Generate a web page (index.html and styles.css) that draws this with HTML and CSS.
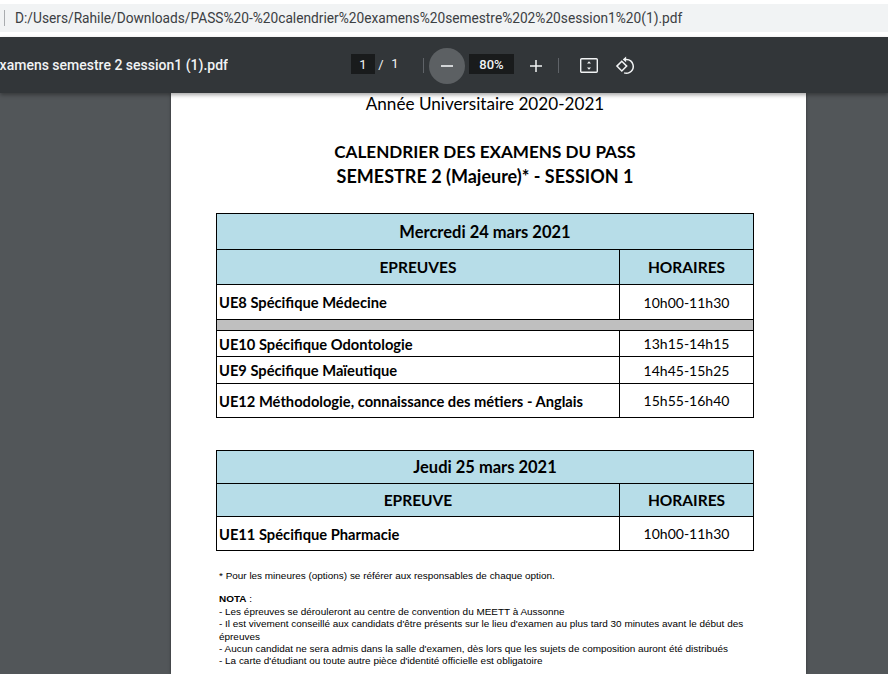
FILE: index.html
```html
<!DOCTYPE html>
<html lang="fr">
<head>
<meta charset="utf-8">
<title>PDF</title>
<link rel="stylesheet" href="styles.css">
</head>
<body>
<div class="address-wrap">
  <div class="address">
    <span class="address-sep"></span>
    <span class="url">D:/Users/Rahile/Downloads/PASS%20-%20calendrier%20examens%20semestre%202%20session1%20(1).pdf</span>
  </div>
</div>
<header class="toolbar">
  <div class="doc-title"><span>PASS - calendrier examens semestre 2 session1 (1).pdf</span></div>
  <div class="controls">
    <span class="page-box">1</span>
    <span class="page-slash">/</span>
    <span class="page-total">1</span>
    <span class="divider first"></span>
    <span class="zoom-out">
      <svg width="14" height="14" viewBox="0 0 14 14"><path d="M1 7h12" stroke="#f1f3f4" stroke-width="1.6"/></svg>
    </span>
    <span class="zoom-box">80%</span>
    <svg class="plus" width="14" height="14" viewBox="0 0 14 14"><path d="M1 7h12M7 1v12" stroke="#f1f3f4" stroke-width="1.5" fill="none"/></svg>
    <span class="divider second"></span>
    <svg class="fit" width="20" height="18" viewBox="0 0 20 18"><rect x="1.700" y="1.700" width="16.600" height="13.600" rx="1" fill="none" stroke="#f1f3f4" stroke-width="1.400"/><path d="M10 4.200l2 2.400H8zM10 12.800l2-2.400H8z" fill="#f1f3f4"/></svg>
    <svg class="rotate" width="20" height="20" viewBox="0 0 20 20"><path d="M6.800 5.200 1.900 10.100l4.900 4.900 4.900-4.900z" fill="none" stroke="#f1f3f4" stroke-width="1.500"/><path d="M9.200 3.400h2.200a6.900 6.900 0 0 1 3.300 12.900 6.900 6.900 0 0 1-5.600.6" fill="none" stroke="#f1f3f4" stroke-width="1.500"/><path d="M11.100.6 7.800 3.400l3.300 2.800z" fill="#f1f3f4"/></svg>
  </div>
</header>
<main class="viewer">
  <article class="page">
    <p class="year">Année Universitaire 2020-2021</p>
    <h1 class="heading">CALENDRIER DES EXAMENS DU PASS<br><span class="heading-second">SEMESTRE 2 (Majeure)* - SESSION 1</span></h1>
    <table class="exam first-table">
      <colgroup><col class="col-name"><col class="col-time"></colgroup>
      <tr class="r36"><th colspan="2" class="head day">Mercredi 24 mars 2021</th></tr>
      <tr class="r35"><th class="head">EPREUVES</th><th class="head">HORAIRES</th></tr>
      <tr class="r35"><td class="name">UE8 Spécifique Médecine</td><td class="time">10h00-11h30</td></tr>
      <tr class="r11"><td colspan="2" class="gap"></td></tr>
      <tr class="r26"><td class="name">UE10 Spécifique Odontologie</td><td class="time">13h15-14h15</td></tr>
      <tr class="r27"><td class="name">UE9 Spécifique Maïeutique</td><td class="time">14h45-15h25</td></tr>
      <tr class="r34"><td class="name">UE12 Méthodologie, connaissance des métiers - Anglais</td><td class="time">15h55-16h40</td></tr>
    </table>
    <table class="exam second-table">
      <colgroup><col class="col-name"><col class="col-time"></colgroup>
      <tr class="r33"><th colspan="2" class="head day">Jeudi 25 mars 2021</th></tr>
      <tr class="r33"><th class="head">EPREUVE</th><th class="head">HORAIRES</th></tr>
      <tr class="r34"><td class="name">UE11 Spécifique Pharmacie</td><td class="time">10h00-11h30</td></tr>
    </table>
    <p class="note star">* Pour les mineures (options) se référer aux responsables de chaque option.</p>
    <div class="note nota">
      <b>NOTA</b> :<br>
      - Les épreuves se dérouleront au centre de convention du MEETT à Aussonne<br>
      - Il est vivement conseillé aux candidats d'être présents sur le lieu d'examen au plus tard 30 minutes avant le début des épreuves<br>
      - Aucun candidat ne sera admis dans la salle d'examen, dès lors que les sujets de composition auront été distribués<br>
      - La carte d'étudiant ou toute autre pièce d'identité officielle est obligatoire
    </div>
  </article>
</main>
</body>
</html>
```
FILE: styles.css
```css
* { box-sizing: border-box; }
html, body { margin: 0; height: 100%; }
body {
  width: 888px;
  height: 674px;
  overflow: hidden;
  background: #fff;
  display: flex;
  flex-direction: column;
  font-family: "Liberation Sans", sans-serif;
}
.address-wrap { height: 37px; padding-top: 4px; background: #fff; flex: none; }
.address {
  height: 28px;
  background: #f1f3f4;
  display: flex;
  align-items: center;
  padding-left: 4px;
}
.address-sep { width: 1px; height: 16px; background: #a9acaf; flex: none; }
.url {
  margin-left: 10px;
  font-family: Roboto, sans-serif;
  font-size: 13.73px;
  color: #3c4043;
  white-space: nowrap;
}
.toolbar {
  height: 56px;
  flex: none;
  background: #323639;
  display: flex;
  align-items: center;
  box-shadow: 0 2px 4px rgba(0, 0, 0, .35);
  position: relative;
  z-index: 1;
}
.doc-title {
  width: 228px;
  flex: none;
  overflow: hidden;
  display: flex;
  justify-content: flex-end;
  font-family: Roboto, sans-serif;
  font-size: 14px;
  font-weight: 500;
  color: #f1f3f4;
  white-space: nowrap;
}
.doc-title span { flex: none; }
.controls {
  margin-left: 123px;
  display: flex;
  align-items: center;
  font-family: Roboto, sans-serif;
  font-size: 13px;
  color: #f1f3f4;
}
.page-box {
  width: 24px;
  height: 20px;
  margin-bottom: 2px;
  background: #191b1c;
  display: flex;
  align-items: center;
  justify-content: center;
}
.page-slash { margin-left: 1px; width: 10px; text-align: center; margin-bottom: 2px; }
.page-total { margin-left: 4px; width: 10px; text-align: center; margin-bottom: 4px; }
.divider { width: 1px; height: 15px; background: #5f6368; flex: none; }
.divider.first { margin-left: 23px; }
.divider.second { margin-left: 15px; }
.zoom-out {
  margin: 2px 0 0 5px;
  width: 36px;
  height: 36px;
  border-radius: 50%;
  background: #5c6063;
  display: flex;
  align-items: center;
  justify-content: center;
}
.zoom-box {
  margin: 0 0 2px 4px;
  width: 45px;
  height: 20px;
  background: #191b1c;
  font-weight: 500;
  display: flex;
  align-items: center;
  justify-content: center;
}
.plus { margin: 2px 0 0 15px; flex: none; }
.fit { margin: 2px 0 0 20px; flex: none; }
.rotate { margin: 2px 0 0 16px; flex: none; }
.viewer {
  flex: 1;
  min-height: 0;
  background: #525659;
  overflow: hidden;
  padding-left: 171px;
}
.page {
  width: 635px;
  height: 100%;
  background: #fff;
  padding: 0 45px;
  color: #000;
  box-shadow: 0 0 3px rgba(0, 0, 0, .4);
  overflow: hidden;
}
.year {
  margin: 0;
  padding-right: 7px;
  height: 33px;
  line-height: 21px;
  text-align: center;
  font-family: Lato, sans-serif;
  font-size: 17.15px;
}
.heading {
  margin: 13px 0 0;
  padding-right: 7px;
  height: 74px;
  line-height: 25px;
  text-align: center;
  font-family: Lato, sans-serif;
  font-size: 17.1px;
  font-weight: 700;
}
.heading-second { font-size: 18px; }
.exam {
  width: 538px;
  border-collapse: collapse;
  table-layout: fixed;
  font-family: Lato, sans-serif;
  font-size: 14.7px;
}
.col-time { width: 134px; }
.exam th, .exam td { border: 1px solid #000; padding: 0; }
.second-table { margin-top: 32px; }
.head { background: #b7dde8; font-weight: 700; font-size: 15.5px; text-align: center; }
.head.day { font-size: 16.5px; }
.name { font-weight: 700; padding-left: 2px !important; }
.time { text-align: center; font-size: 14px; }
.gap { background: #bfbfbf; }
.r36 { height: 36px; }
.r35 { height: 35px; }
.r11 { height: 11px; }
.r26 { height: 26px; }
.r27 { height: 27px; }
.r34 { height: 34px; }
.r33 { height: 33px; }
.note { font-size: 9.95px; line-height: 12.4px; color: #000; }
.star { margin: 19px 0 0 3px; }
.nota { margin: 11px 3px 0 3px; }
```
